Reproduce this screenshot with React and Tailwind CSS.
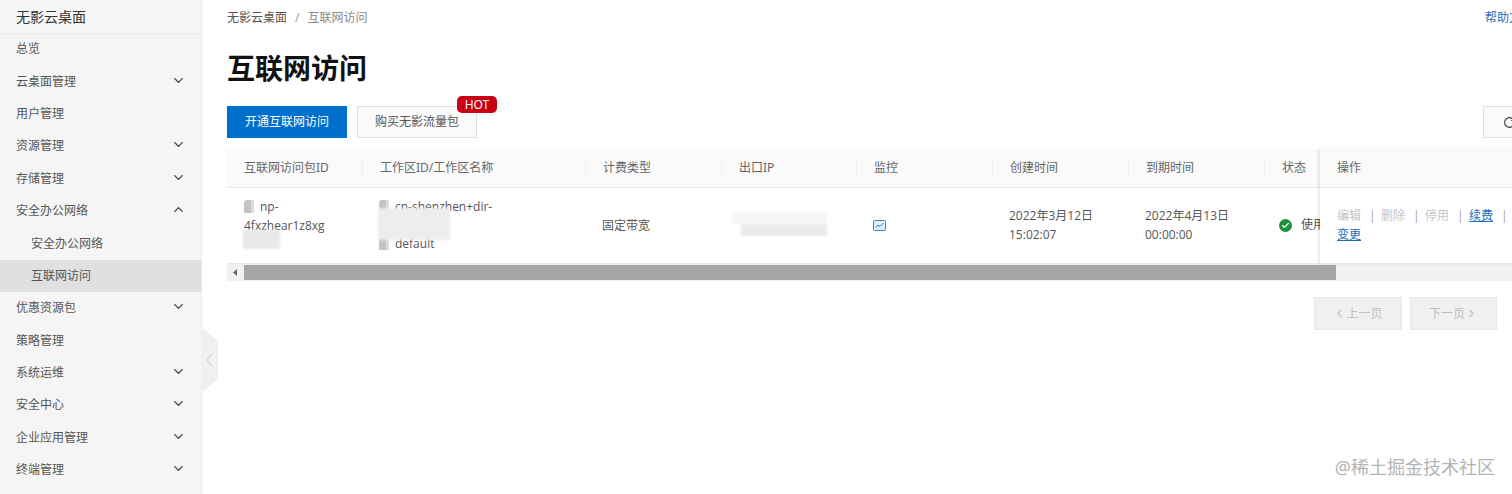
import { ChevronDown, ChevronUp, ChevronLeft, ChevronRight, RotateCw, Check } from 'lucide-react'

const menuItems = [
  { title: '总览' },
  { title: '云桌面管理', arrow: 'down' },
  { title: '用户管理' },
  { title: '资源管理', arrow: 'down' },
  { title: '存储管理', arrow: 'down' },
  { title: '安全办公网络', arrow: 'up' },
  { title: '安全办公网络', sub: true },
  { title: '互联网访问', sub: true, active: true },
  { title: '优惠资源包', arrow: 'down' },
  { title: '策略管理' },
  { title: '系统运维', arrow: 'down' },
  { title: '安全中心', arrow: 'down' },
  { title: '企业应用管理', arrow: 'down' },
  { title: '终端管理', arrow: 'down' },
]

const columns = ['工作区ID/工作区名称', '计费类型', '出口IP', '监控', '创建时间', '到期时间', '状态']
const rowGrid = 'grid grid-cols-[135px_223px_136px_135px_136px_136px_136px_120px] w-[1257px]'

function DocIcon() {
  return (
    <svg width="10" height="13" viewBox="0 0 10 13" className="inline-block align-[-2px] mr-[6px]">
      <path d="M0 2 L2 0 H10 V13 H0 Z" fill="#c4c4c4" />
      <path d="M7 0 H10 V13 H7 Z" fill="#dcdcdc" />
    </svg>
  )
}

function Sidebar() {
  return (
    <aside className="relative w-[202px] shrink-0 h-[494px] bg-[#f5f5f5] border-r border-[#ececec]">
      <div className="h-[33px] pl-[16px] flex items-center text-[14px] text-[#333] bg-[#f6f6f6] shadow-[0_1px_2px_rgba(0,0,0,0.05)]">
        无影云桌面
      </div>
      {menuItems.map((item, i) => (
        <div
          key={i}
          className={`h-[32.4px] flex items-center justify-between pr-[15px] text-[12px] text-[#555] ${
            item.sub ? 'pl-[31px]' : 'pl-[16px]'
          } ${item.active ? 'bg-[#e0e0e0]' : ''}`}
        >
          <span>{item.title}</span>
          {item.arrow === 'down' && <ChevronDown size={15} strokeWidth={2.2} className="text-[#444] -mt-[3px]" />}
          {item.arrow === 'up' && <ChevronUp size={15} strokeWidth={2.2} className="text-[#444] -mt-[3px]" />}
        </div>
      ))}
      {/* collapse handle */}
      <svg width="17" height="66" viewBox="0 0 17 66" className="absolute left-[201px] top-[327px]">
        <path d="M0 0 L17 14 V52 L0 66 Z" fill="#f0f0f0" />
        <path d="M11 27 L6 33 L11 39" fill="none" stroke="#c8c8c8" strokeWidth="1" />
      </svg>
    </aside>
  )
}

function Table() {
  return (
    <div className="mt-[11px] relative">
      <div className="flex h-[115px]">
        <div className="w-[1093px] shrink-0 overflow-hidden">
          <div className={`${rowGrid} h-[39px] bg-[#fafafa] border-b border-[#e8e8e8] text-[12px] text-[#666]`}>
            <div className="flex items-center pl-[17px]">互联网访问包ID</div>
            {columns.map((col) => (
              <div key={col} className="flex items-center">
                <div className="h-[22px] w-full flex items-center pl-[17px] border-l border-[#efefef]">{col}</div>
              </div>
            ))}
          </div>
          <div className={`${rowGrid} h-[76px] border-b border-[#e8e8e8] text-[12px] leading-[18.5px] text-[#555] font-['Open_Sans','Noto_Sans_CJK_SC',sans-serif]`}>
            <div className="relative pl-[17px] pr-[16px] pt-[10px] break-words">
              <DocIcon />
              np-
              <br />
              4fxzhear1z8xg
              <div className="absolute left-[16px] top-[42px] w-[37px] h-[19px] bg-[#e9e9e9] blur-[1px]" />
            </div>
            <div className="relative pl-[17px] pt-[10px]">
              <DocIcon />
              cn-shenzhen+dir-
              <br />
              <br />
              <DocIcon />
              default
              <div className="absolute left-[16px] top-[20px] w-[72px] h-[32px] bg-[#ededed] blur-[1px]" />
            </div>
            <div className="flex items-center pl-[17px] font-['Noto_Sans_CJK_SC',sans-serif]">固定带宽</div>
            <div className="relative">
              <div className="absolute left-[11px] top-[24px] w-[95px] h-[12px] bg-[#f5f5f5] blur-[1px]" />
              <div className="absolute left-[20px] top-[36px] w-[86px] h-[12px] bg-[#eaeaea] blur-[1px]" />
            </div>
            <div className="flex items-center pl-[17px]">
              <svg width="13" height="11" viewBox="0 0 13 11">
                <rect x="0.5" y="0.5" width="12" height="10" rx="1" fill="#e3f0fa" stroke="#2b8ad6" />
                <path d="M2.5 7.5 L5 5 L7 6.5 L10.5 3" fill="none" stroke="#2b7fcb" />
              </svg>
            </div>
            <div className="flex items-center pl-[17px]">
              <span>
                2022年3月12日
                <br />
                15:02:07
              </span>
            </div>
            <div className="flex items-center pl-[17px]">
              <span>
                2022年4月13日
                <br />
                00:00:00
              </span>
            </div>
            <div className="flex items-center pl-[15px] whitespace-nowrap">
              <span className="w-[13px] h-[13px] rounded-full bg-[#1e9139] flex items-center justify-center mr-[9px]">
                <Check size={9} strokeWidth={3} className="text-white" />
              </span>
              使用中
            </div>
          </div>
        </div>
        <div className="w-[200px] shrink-0 bg-white shadow-[-2px_0_3px_rgba(0,0,0,0.09)] z-10">
          <div className="h-[39px] pl-[17px] flex items-center bg-[#fafafa] border-b border-[#e8e8e8] text-[12px] text-[#666]">操作</div>
          <div className="h-[76px] pl-[17px] pt-[19px] border-b border-[#e8e8e8] flex flex-wrap content-start text-[12px] leading-[18.5px]">
            {['编辑', '删除', '停用'].map((t) => (
              <span key={t} className="w-[44px] flex text-[#c4c4c4]">
                {t}
                <span className="ml-[8px] text-[#aaa]">|</span>
              </span>
            ))}
            <span className="w-[44px] flex text-[#1d6bc2]">
              <span className="underline">续费</span>
              <span className="ml-[8px] text-[#aaa]">|</span>
            </span>
            <span className="text-[#1d6bc2] underline w-[44px]">变更</span>
          </div>
        </div>
      </div>
      {/* horizontal scrollbar */}
      <div className="flex h-[17px] bg-[#f1f1f1]">
        <div className="w-[17px] flex items-center justify-center">
          <svg width="5" height="7" viewBox="0 0 5 7">
            <path d="M4 0 V7 L0 3.5 Z" fill="#666" />
          </svg>
        </div>
        <div className="w-[1092px] h-[15px] mt-[1px] bg-[#a6a6a6]" />
      </div>
    </div>
  )
}

export default function App() {
  return (
    <div className="relative flex w-[1512px] h-[494px] overflow-hidden bg-white font-['Noto_Sans','Noto_Sans_CJK_SC',sans-serif]">
      <Sidebar />
      <main className="flex-1 min-w-0 pl-[25px] overflow-hidden">
        <div className="w-[1306px] h-[36px] flex items-center justify-between text-[12px]">
          <div>
            <span className="text-[#555]">无影云桌面</span>
            <span className="mx-[8px] text-[#999]">/</span>
            <span className="text-[#888]">互联网访问</span>
          </div>
          <span className="text-[#1d6bc2]">帮助文档</span>
        </div>
        <h1 className="h-[44px] mt-[10px] flex items-center text-[28px] font-bold text-[#111]">互联网访问</h1>
        <div className="w-[1308px] mt-[16px] flex justify-between">
          <div className="flex gap-[10px]">
            <button className="w-[120px] h-[32px] bg-[#0070cc] text-white text-[12px]">开通互联网访问</button>
            <div className="relative">
              <button className="w-[120px] h-[32px] bg-[#fafafa] border border-[#dedede] text-[#555] text-[12px]">购买无影流量包</button>
              <span className="absolute left-[100px] -top-[10px] w-[40px] h-[17px] rounded-[5px] bg-[#c80014] text-white text-[12px] leading-[17px] text-center">HOT</span>
            </div>
          </div>
          <button className="w-[52px] h-[32px] bg-[#fafafa] border border-[#dedede] flex items-center justify-center text-[#333]">
            <RotateCw size={13} />
          </button>
        </div>
        <Table />
        <div className="mt-[16px] pr-[15px] flex justify-end gap-[8px] text-[12px] text-[#c0c0c0]">
          <div className="w-[88px] h-[33px] bg-[#f0f0f0] border border-[#e6e6e6] flex items-center justify-center">
            <ChevronLeft size={13} />
            上一页
          </div>
          <div className="w-[87px] h-[33px] bg-[#f0f0f0] border border-[#e6e6e6] flex items-center justify-center">
            下一页
            <ChevronRight size={13} />
          </div>
        </div>
      </main>
      <span className="absolute right-[17px] top-[455px] text-[18px] leading-[24px] text-[#b4b4b4]">@稀土掘金技术社区</span>
    </div>
  )
}
